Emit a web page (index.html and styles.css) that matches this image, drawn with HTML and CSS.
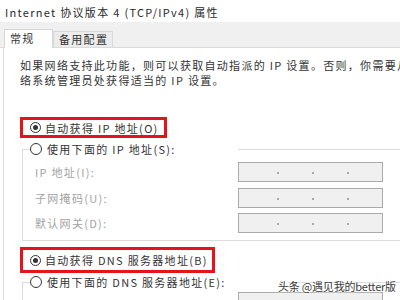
FILE: index.html
```html
<!DOCTYPE html>
<html>
<head>
<meta charset="utf-8">
<link rel="stylesheet" href="styles.css">
</head>
<body>
<div class="title">Internet 协议版本 4 (TCP/IPv4) 属性</div>
<div class="tabstrip">
  <div class="tab active">常规</div>
  <div class="tab">备用配置</div>
</div>
<div class="panel">
  <p class="para">如果网络支持此功能，则可以获取自动指派的 IP 设置。否则，你需要从<br>络系统管理员处获得适当的 IP 设置。</p>
  <div class="mark mark1">
    <span class="radio on"></span><span class="lbl">自动获得 IP 地址(O)</span>
  </div>
  <fieldset class="group">
    <legend><span class="radio"></span><span class="lbl">使用下面的 IP 地址(S):</span></legend>
    <div class="row"><span class="flabel">IP 地址(I):</span><span class="ipbox"><i></i><i></i><i></i></span></div>
    <div class="row"><span class="flabel">子网掩码(U):</span><span class="ipbox"><i></i><i></i><i></i></span></div>
    <div class="row"><span class="flabel">默认网关(D):</span><span class="ipbox"><i></i><i></i><i></i></span></div>
  </fieldset>
  <div class="mark mark2">
    <span class="radio on"></span><span class="lbl">自动获得 DNS 服务器地址(B)</span>
  </div>
  <fieldset class="group group2">
    <legend><span class="radio"></span><span class="lbl">使用下面的 DNS 服务器地址(E):</span></legend>
    <div class="row"><span class="flabel"></span><span class="ipbox"><i></i><i></i><i></i></span></div>
  </fieldset>
</div>
<div class="watermark">头条 @遇见我的better版</div>
</body>
</html>
```
FILE: styles.css
```css
html, body {
  margin: 0;
  padding: 0;
  background: #ffffff;
  overflow: hidden;
  width: 400px;
  height: 300px;
}
body {
  font-family: "Noto Sans CJK SC", "Noto Sans", sans-serif;
  font-size: 11px;
  color: #333333;
  letter-spacing: 1.3px;
  position: relative;
}
.title {
  height: 22px;
  line-height: 24px;
  padding-left: 5px;
  white-space: nowrap;
  color: #2a2a2a;
}
.tabstrip {
  height: 25px;
  background: #f0f0f0;
  border-bottom: 1px solid #dadada;
  display: flex;
  align-items: flex-end;
  padding-left: 4px;
}
.tab {
  box-sizing: border-box;
  height: 16px;
  line-height: 15px;
  padding: 0 4px 0 5px;
  border: 1px solid #d8d8d8;
  border-bottom: none;
  background: #ececec;
  white-space: nowrap;
}
.tab.active {
  width: 49px;
  height: 19px;
  line-height: 17px;
  padding-left: 5px;
  background: #ffffff;
  margin-bottom: -1px;
}
.panel {
  margin-left: 3px;
  border-left: 1px solid #dddddd;
  height: 250px;
  padding-top: 10px;
}
.para {
  margin: 0 0 0 16px;
  line-height: 15px;
  white-space: nowrap;
  height: 30px;
  overflow: hidden;
}
.mark {
  box-sizing: border-box;
  border: 3px solid #e5131b;
  display: flex;
  align-items: center;
  padding-left: 7px;
  margin-left: 16px;
}
.mark1 {
  margin-top: 29px;
  width: 147px;
  height: 21px;
}
.mark2 {
  margin-top: 6px;
  width: 195px;
  height: 26px;
}
.radio {
  box-sizing: border-box;
  width: 11px;
  height: 11px;
  border: 1px solid #333333;
  border-radius: 50%;
  background: #ffffff;
  display: inline-flex;
  align-items: center;
  justify-content: center;
  margin-right: 4px;
  flex: none;
}
.radio.on::after {
  content: "";
  width: 5px;
  height: 5px;
  border-radius: 50%;
  background: #333333;
}
.lbl {
  white-space: nowrap;
  line-height: 14px;
}
.group {
  margin: 4px 0 0 18px;
  padding: 6px 0 7px 7px;
  border: 1px solid #dcdcdc;
  border-right: none;
  min-width: 0;
}
.group legend {
  padding: 0;
  margin-left: 0;
  display: flex;
  align-items: center;
  height: 14px;
}
.group legend .radio {
  width: 12px;
  height: 12px;
  margin-right: 5px;
}
.group legend .lbl {
  padding-right: 62px;
}
.group2 {
  margin-top: 2px;
  padding-top: 3px;
}
.row {
  display: flex;
  align-items: center;
  height: 20px;
  margin-bottom: 5.5px;
}
.row:last-child {
  margin-bottom: 0;
}
.flabel {
  width: 203px;
  margin-left: 5px;
  color: #a3a3a3;
  white-space: nowrap;
}
.ipbox {
  box-sizing: border-box;
  width: 145px;
  height: 20px;
  border: 1px solid #ababab;
  background: #f0f0f0;
  display: flex;
  align-items: center;
  padding-left: 38px;
  gap: 33px;
  flex: none;
}
.ipbox i {
  width: 2px;
  height: 2px;
  background: #a8a8a8;
  margin-top: 2px;
}
.watermark {
  position: absolute;
  left: 278px;
  top: 278px;
  font-size: 11px;
  letter-spacing: -0.2px;
  color: #3a3a3a;
  white-space: nowrap;
  text-shadow: 0 0 2px #ffffff, 0 0 2px #ffffff, 0 0 3px #ffffff;
}
```
